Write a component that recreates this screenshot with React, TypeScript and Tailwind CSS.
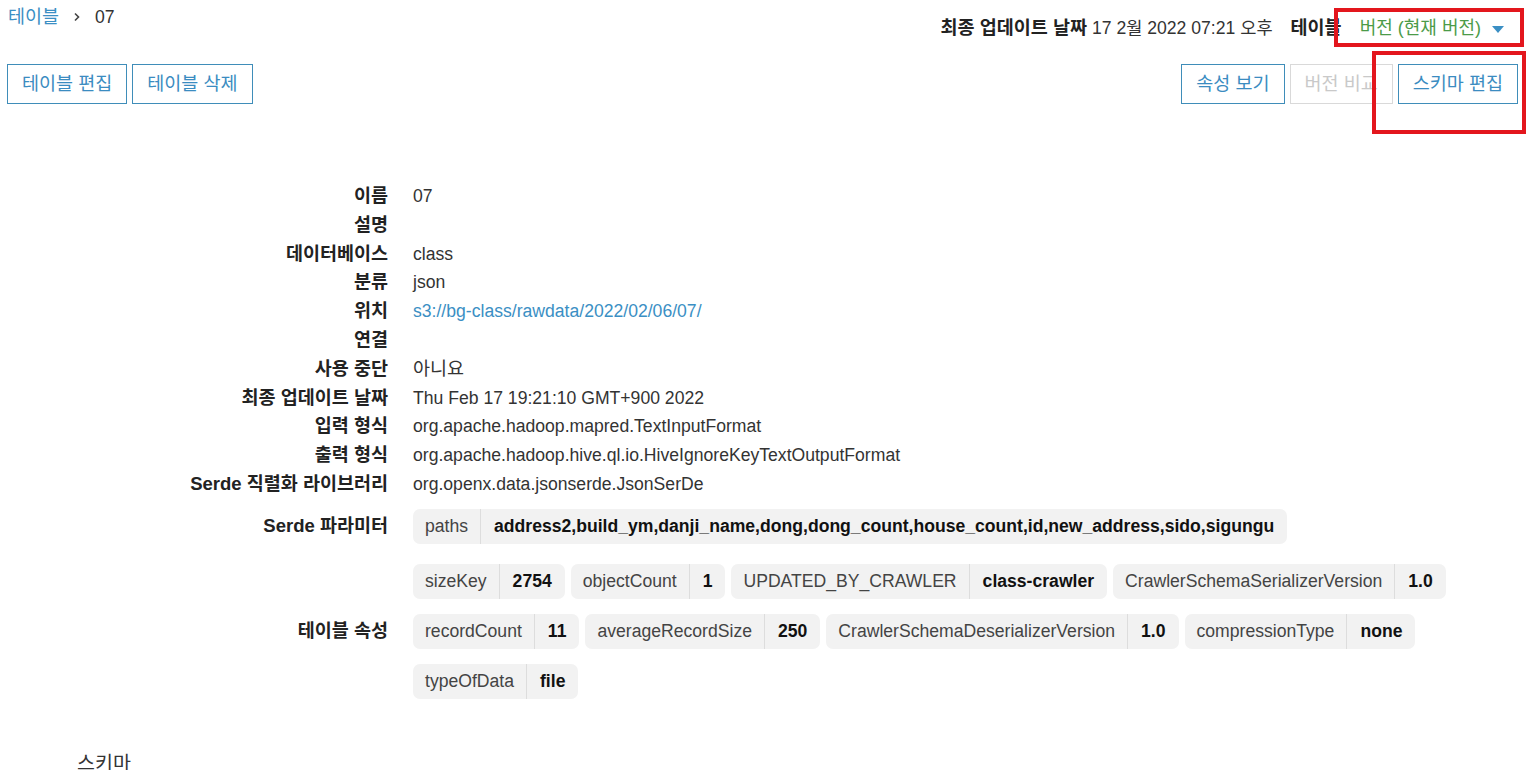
import React from "react";

type Tag = { k: string; v: string };

const serdeParams: Tag[][] = [
  [{ k: "paths", v: "address2,build_ym,danji_name,dong,dong_count,house_count,id,new_address,sido,sigungu" }],
];

const tableProps: Tag[][] = [
  [
    { k: "sizeKey", v: "2754" },
    { k: "objectCount", v: "1" },
    { k: "UPDATED_BY_CRAWLER", v: "class-crawler" },
    { k: "CrawlerSchemaSerializerVersion", v: "1.0" },
  ],
  [
    { k: "recordCount", v: "11" },
    { k: "averageRecordSize", v: "250" },
    { k: "CrawlerSchemaDeserializerVersion", v: "1.0" },
    { k: "compressionType", v: "none" },
  ],
  [{ k: "typeOfData", v: "file" }],
];

const details: { label: string; value?: string; link?: boolean; ko?: boolean }[] = [
  { label: "이름", value: "07" },
  { label: "설명" },
  { label: "데이터베이스", value: "class" },
  { label: "분류", value: "json" },
  { label: "위치", value: "s3://bg-class/rawdata/2022/02/06/07/", link: true },
  { label: "연결" },
  { label: "사용 중단", value: "아니요", ko: true },
  { label: "최종 업데이트 날짜", value: "Thu Feb 17 19:21:10 GMT+900 2022" },
  { label: "입력 형식", value: "org.apache.hadoop.mapred.TextInputFormat" },
  { label: "출력 형식", value: "org.apache.hadoop.hive.ql.io.HiveIgnoreKeyTextOutputFormat" },
  { label: "Serde 직렬화 라이브러리", value: "org.openx.data.jsonserde.JsonSerDe" },
];

function KeyValueTag({ k, v }: Tag) {
  return (
    <div className="flex h-[35px] items-center rounded-[7px] bg-[#f2f2f2]">
      <span className="px-3 text-[#444]">{k}</span>
      <span className="h-full border-l border-[#dddddd]" />
      <span className="px-[13px] font-bold text-[#111]">{v}</span>
    </div>
  );
}

function TagRows({ rows }: { rows: Tag[][] }) {
  return (
    <div className="flex flex-col gap-[15px]">
      {rows.map((row, i) => (
        <div key={i} className="flex gap-[6px]">
          {row.map((t) => (
            <KeyValueTag key={t.k} k={t.k} v={t.v} />
          ))}
        </div>
      ))}
    </div>
  );
}

function OutlineButton({ children, disabled }: { children: React.ReactNode; disabled?: boolean }) {
  return (
    <button
      className={
        disabled
          ? "h-10 border border-[#d9d9d9] px-[14px] text-[18.5px] text-[#c9c9c9]"
          : "h-10 border border-[#3f8db9] px-[14px] text-[18.5px] text-[#3b8cc1]"
      }
    >
      {children}
    </button>
  );
}

export default function App() {
  return (
    <div className="relative h-[770px] w-[1530px] overflow-hidden bg-white font-['Liberation_Sans','Noto_Sans_CJK_KR',sans-serif] text-[17.6px] text-[#333]">
      {/* 상단 바 */}
      <div className="flex items-start justify-between">
        <div className="flex items-center pl-2 pt-[5px] leading-6">
          <span className="text-[18.5px] text-[#3b8fc4]">테이블</span>
          <svg className="mx-[12px] h-3 w-3" viewBox="0 0 12 12" fill="none">
            <path d="M4 2.5 7.5 6 4 9.5" stroke="#444" strokeWidth="1.6" />
          </svg>
          <span>07</span>
        </div>
        <div className="flex items-center pr-[26px] pt-[16px] leading-6">
          <span className="text-[18.5px] font-bold text-[#222]">최종 업데이트 날짜</span>
          <span className="ml-[5px]">17 2월 2022 07:21 오후</span>
          <span className="ml-[18px] text-[18.5px] font-bold text-[#222]">테이블</span>
          <span className="ml-[18px] text-[18px] text-[#4b9b48]">버전 (현재 버전)</span>
          <svg className="ml-[11px] mt-[3px] h-[7px] w-[12px]" viewBox="0 0 12 7">
            <path d="M0 0h12L6 7z" fill="#3b8fc4" />
          </svg>
        </div>
      </div>

      {/* 버튼 */}
      <div className="mt-[24px] flex justify-between pl-[7px] pr-[12px]">
        <div className="flex gap-[5px]">
          <OutlineButton>테이블 편집</OutlineButton>
          <OutlineButton>테이블 삭제</OutlineButton>
        </div>
        <div className="flex gap-[5px]">
          <OutlineButton>속성 보기</OutlineButton>
          <OutlineButton disabled>버전 비교</OutlineButton>
          <OutlineButton>스키마 편집</OutlineButton>
        </div>
      </div>

      {/* 상세 정보 */}
      <div className="mt-[78px] grid grid-cols-[388px_1fr] gap-x-[25px] leading-[28.8px]">
        {details.map((d) => (
          <React.Fragment key={d.label}>
            <div className="text-right text-[18.5px] font-bold text-[#222]">{d.label}</div>
            <div className={d.link ? "text-[#3b8fc4]" : d.ko ? "text-[18.5px]" : ""}>{d.value ?? ""}</div>
          </React.Fragment>
        ))}
      </div>

      <div className="mt-[10px] grid grid-cols-[388px_1fr] items-center gap-x-[25px]">
        <div className="text-right text-[18.5px] font-bold text-[#222]">Serde 파라미터</div>
        <TagRows rows={serdeParams} />
      </div>

      <div className="mt-[20px] grid grid-cols-[388px_1fr] items-center gap-x-[25px]">
        <div className="text-right text-[18.5px] font-bold text-[#222]">테이블 속성</div>
        <TagRows rows={tableProps} />
      </div>

      <div className="mt-[52px] pl-[77px] text-[19.5px] leading-6 text-[#333]">스키마</div>

      {/* 강조 표시 */}
      <div className="absolute left-[1334px] top-[8px] h-[39px] w-[190px] border-4 border-[#e3161d]" />
      <div className="absolute left-[1372px] top-[51px] h-[83px] w-[154px] border-4 border-[#e3161d]" />
    </div>
  );
}
